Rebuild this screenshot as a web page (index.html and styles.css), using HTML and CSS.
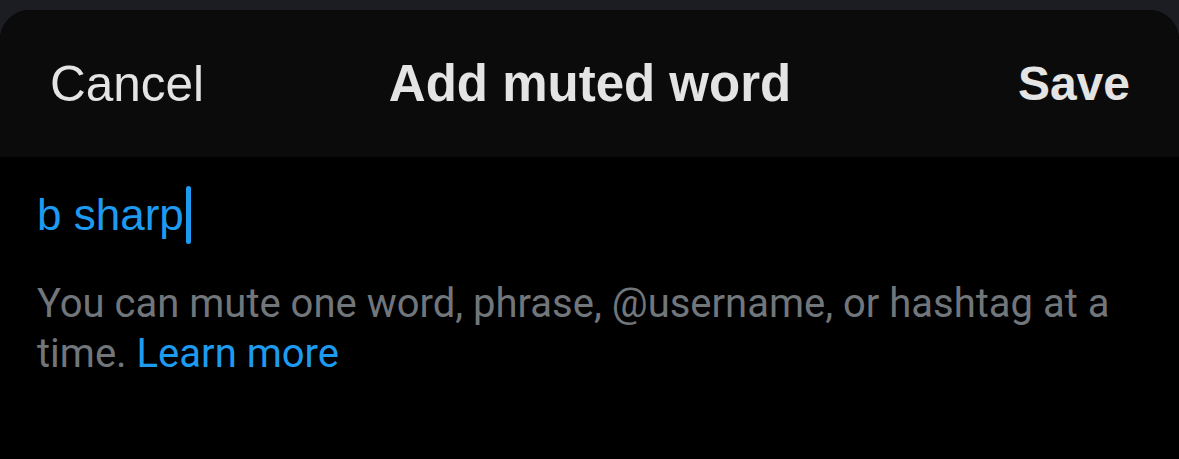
FILE: index.html
```html
<!DOCTYPE html>
<html>
<head>
<meta charset="utf-8">
<link rel="stylesheet" href="styles.css">
</head>
<body>
<div class="sheet">
  <header class="bar">
    <span class="cancel">Cancel</span>
    <span class="title">Add muted word</span>
    <span class="save">Save</span>
  </header>
  <main class="content">
    <div class="input"><span class="typed">b sharp</span><span class="caret"></span></div>
    <p class="hint">You can mute one word, phrase, @username, or hashtag at a time. <span class="link">Learn more</span></p>
  </main>
</div>
</body>
</html>
```
FILE: styles.css
```css
html, body {
  margin: 0;
  padding: 0;
  background: #1c1d22;
  width: 1179px;
  height: 459px;
  overflow: hidden;
}
.sheet {
  margin-top: 10px;
  height: 449px;
  border-radius: 30px 30px 0 0;
  overflow: hidden;
  background: #000;
  display: flex;
  flex-direction: column;
}
.bar {
  height: 147px;
  flex: none;
  background: #0b0b0b;
  display: grid;
  grid-template-columns: 1fr auto 1fr;
  align-items: center;
  padding: 0 49px 0 50px;
  color: #e4e4e4;
  font-family: "Liberation Sans", Arial, sans-serif;
  box-sizing: border-box;
}
.cancel {
  font-size: 49.5px;
  justify-self: start;
  padding-top: 0;
}
.title {
  font-size: 51px;
  font-weight: 700;
  padding-top: 0;
}
.save {
  font-size: 48px;
  font-weight: 700;
  justify-self: end;
  padding-top: 0;
}
.content {
  padding: 28px 37px 0 37px;
}
.input {
  display: flex;
  align-items: center;
  height: 60px;
  color: #1d9bf0;
  font-family: "Liberation Sans", Arial, sans-serif;
  font-size: 44px;
}
.caret {
  width: 5px;
  height: 58px;
  border-radius: 3px;
  background: #1d9bf0;
  margin-left: 2px;
}
.hint {
  margin: 34px 0 0 0;
  font-family: Roboto, "Liberation Sans", sans-serif;
  font-size: 40px;
  line-height: 50px;
  color: #71767b;
  width: 1110px;
}
.link {
  color: #1d9bf0;
}
```
